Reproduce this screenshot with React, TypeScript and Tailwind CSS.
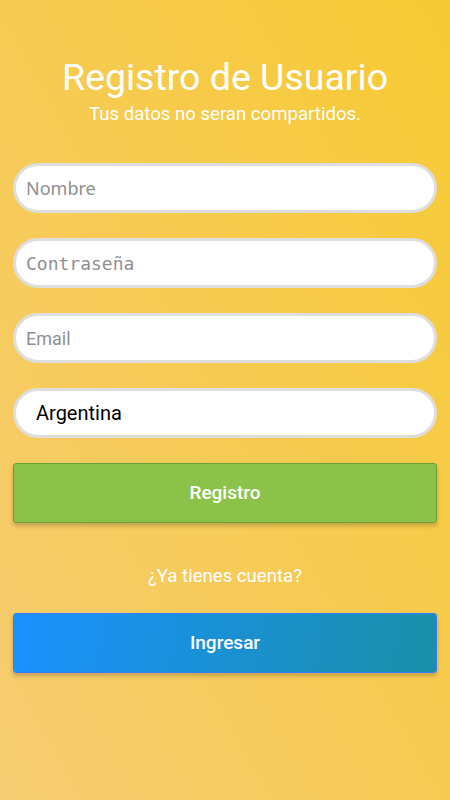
import React from "react";

export default function App() {
  const inputBase =
    "w-full h-[50px] rounded-[25px] border-[3px] border-[#dedede] bg-white px-[10px] text-[18px] outline-none placeholder:text-[#8f8f8f]";
  return (
    <div
      className="w-[450px] h-[800px] flex flex-col px-[13px] bg-[linear-gradient(to_bottom_left,#f7ca33,#f6cc72)]"
      style={{ fontFamily: "Roboto, 'Liberation Sans', sans-serif" }}
    >
      <h1 className="mt-[55px] text-center text-white text-[37.5px] leading-[44px] font-normal">
        Registro de Usuario
      </h1>
      <p className="text-center text-white text-[18.6px] leading-[22px] mt-[4px]">
        Tus datos no seran compartidos.
      </p>

      <div className="mt-[38px] flex flex-col gap-[25px]">
        <input
          className={inputBase}
          placeholder="Nombre"
          style={{ fontFamily: "'Noto Sans', 'Open Sans', sans-serif" }}
        />
        <input
          className={inputBase}
          placeholder="Contraseña"
          type="text"
          style={{ fontFamily: "'DejaVu Sans Mono', monospace" }}
        />
        <input className={inputBase} placeholder="Email" />
        <div className="w-full h-[50px] rounded-[25px] border-[3px] border-[#dedede] bg-white flex items-center pl-[20px] text-[20px] text-black">
          Argentina
        </div>
      </div>

      <button className="mt-[25px] h-[60px] w-full rounded-[3px] border border-[#6a9f38] bg-[#8bc34a] text-white text-[19px] font-medium shadow-[0_3px_4px_rgba(0,0,0,0.2)]">
        Registro
      </button>

      <p className="mt-[42px] text-center text-white text-[18.6px] leading-[22px]">
        ¿Ya tienes cuenta?
      </p>

      <button className="mt-[26px] h-[60px] w-full rounded-[3px] border border-[#3a7cff] bg-[linear-gradient(100deg,#1a91ff,#1a8fa8)] text-white text-[19px] font-medium shadow-[0_3px_4px_rgba(0,0,0,0.2)]">
        Ingresar
      </button>
    </div>
  );
}
